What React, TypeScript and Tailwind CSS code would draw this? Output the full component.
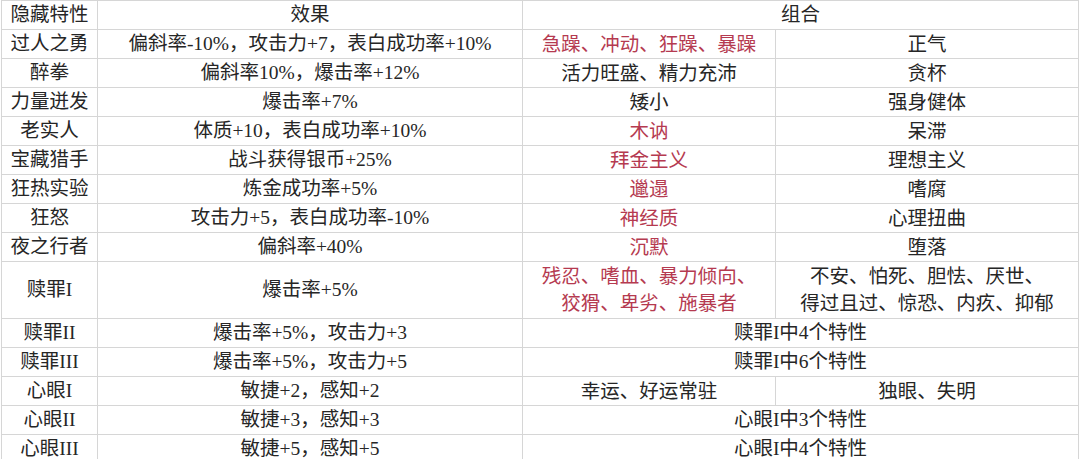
import React from 'react';

type Row = {
  name: string;
  effect: string;
  a?: string;
  b?: string;
  merged?: string;
  red?: boolean;
  tall?: boolean;
};

const rows: Row[] = [
  { name: '过人之勇', effect: '偏斜率-10%，攻击力+7，表白成功率+10%', a: '急躁、冲动、狂躁、暴躁', b: '正气', red: true },
  { name: '醉拳', effect: '偏斜率10%，爆击率+12%', a: '活力旺盛、精力充沛', b: '贪杯' },
  { name: '力量迸发', effect: '爆击率+7%', a: '矮小', b: '强身健体' },
  { name: '老实人', effect: '体质+10，表白成功率+10%', a: '木讷', b: '呆滞', red: true },
  { name: '宝藏猎手', effect: '战斗获得银币+25%', a: '拜金主义', b: '理想主义', red: true },
  { name: '狂热实验', effect: '炼金成功率+5%', a: '邋遢', b: '嗜腐', red: true },
  { name: '狂怒', effect: '攻击力+5，表白成功率-10%', a: '神经质', b: '心理扭曲', red: true },
  { name: '夜之行者', effect: '偏斜率+40%', a: '沉默', b: '堕落', red: true },
  {
    name: '赎罪I',
    effect: '爆击率+5%',
    a: '残忍、嗜血、暴力倾向、\n狡猾、卑劣、施暴者',
    b: '不安、怕死、胆怯、厌世、\n得过且过、惊恐、内疚、抑郁',
    red: true,
    tall: true,
  },
  { name: '赎罪II', effect: '爆击率+5%，攻击力+3', merged: '赎罪I中4个特性' },
  { name: '赎罪III', effect: '爆击率+5%，攻击力+5', merged: '赎罪I中6个特性' },
  { name: '心眼I', effect: '敏捷+2，感知+2', a: '幸运、好运常驻', b: '独眼、失明' },
  { name: '心眼II', effect: '敏捷+3，感知+3', merged: '心眼I中3个特性' },
  { name: '心眼III', effect: '敏捷+5，感知+5', merged: '心眼I中4个特性' },
];

const cell = 'border border-[#d6d6d6] text-center align-middle p-0 whitespace-pre-line';

const App = () => {
  return (
    <div
      className="w-[1080px] h-[459px] overflow-hidden bg-white text-[#262626] text-[19.5px]"
      style={{ fontFamily: '"Liberation Serif", "Noto Sans CJK SC", serif' }}
    >
      <table className="border-collapse table-fixed w-[1077px] ml-px">
        <colgroup>
          <col className="w-[96px]" />
          <col className="w-[425px]" />
          <col className="w-[253px]" />
          <col className="w-[303px]" />
        </colgroup>
        <tbody>
          <tr className="h-[29px]">
            <td className={`${cell} leading-[28px]`}>隐藏特性</td>
            <td className={`${cell} leading-[28px]`}>效果</td>
            <td className={`${cell} leading-[28px]`} colSpan={2}>组合</td>
          </tr>
          {rows.map((r) => (
            <tr key={r.name} className={r.tall ? 'h-[57px]' : 'h-[29px]'}>
              <td className={`${cell} leading-[28px]`}>{r.name}</td>
              <td className={`${cell} leading-[28px]`}>{r.effect}</td>
              {r.merged ? (
                <td className={`${cell} leading-[28px]`} colSpan={2}>
                  {r.merged}
                </td>
              ) : (
                <>
                  <td className={`${cell} leading-[27px] ${r.red ? 'text-[#b53a50]' : ''}`}>{r.a}</td>
                  <td className={`${cell} leading-[27px]`}>{r.b}</td>
                </>
              )}
            </tr>
          ))}
        </tbody>
      </table>
    </div>
  );
};

export default App;
